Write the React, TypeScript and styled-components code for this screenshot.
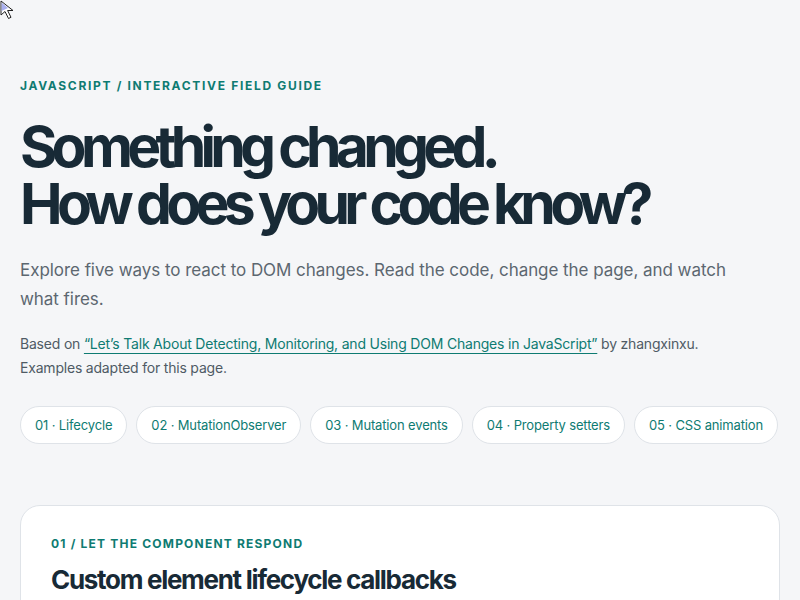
import styled, { createGlobalStyle } from 'styled-components';

const GlobalStyle = createGlobalStyle`
  html, body {
    margin: 0;
    padding: 0;
    background: #f5f6f8;
  }
  body {
    font-family: Inter, "Noto Sans", sans-serif;
    color: #182a36;
  }
`;

const Page = styled.main`
  position: relative;
  padding: 78px 20px 0;
`;

// pointer sitting in the top-left corner
const Pointer = styled.svg`
  position: absolute;
  top: 0;
  left: 0;
  width: 22px;
  height: 20px;
`;

const Eyebrow = styled.p`
  margin: 0;
  font-size: 12px;
  font-weight: 700;
  letter-spacing: 0.14em;
  text-transform: uppercase;
  color: #0e7b72;
`;

const Title = styled.h1`
  margin: 25px 0 0;
  font-size: 57px;
  line-height: 57px;
  font-weight: 700;
  letter-spacing: -0.1em;
  color: #182a36;
`;

const Lead = styled.p`
  margin: 24px 0 0;
  max-width: 730px;
  font-size: 17px;
  line-height: 29px;
  letter-spacing: -0.05px;
  color: #5c6770;
`;

const Credit = styled.p`
  margin: 18px 0 0;
  font-size: 14px;
  line-height: 24px;
  letter-spacing: -0.2px;
  color: #4f5b65;

  a {
    color: #0e7b72;
    text-decoration: underline;
    text-underline-offset: 4px;
  }
`;

const Chips = styled.nav`
  display: flex;
  flex-wrap: wrap;
  gap: 9px;
  margin-top: 26px;
`;

const Chip = styled.a`
  display: inline-flex;
  align-items: center;
  height: 38px;
  padding: 0 14px;
  box-sizing: border-box;
  border: 1px solid #dfe3e8;
  border-radius: 999px;
  background: #fff;
  color: #0e7b72;
  font-size: 13px;
  letter-spacing: -0.15px;
  text-decoration: none;
  white-space: nowrap;
`;

const Card = styled.section`
  margin-top: 61px;
  padding: 30px 30px;
  background: #fff;
  border: 1px solid #dfe3e8;
  border-radius: 20px;
`;

const CardEyebrow = styled(Eyebrow)`
  letter-spacing: 0.1em;
`;

const CardTitle = styled.h2`
  margin: 13px 0 0;
  font-size: 26px;
  line-height: 32px;
  font-weight: 700;
  letter-spacing: -0.05em;
`;

const sections = [
  '01 · Lifecycle',
  '02 · MutationObserver',
  '03 · Mutation events',
  '04 · Property setters',
  '05 · CSS animation',
];

export default function App() {
  return (
    <>
      <GlobalStyle />
      <Page>
        <Pointer viewBox="0 0 22 20">
          <path d="M1 1 L1 15 L5 11.5 L8.5 18.5 L11 17.3 L7.6 10.5 L13 10.5 Z" fill="#fff" stroke="#222" strokeWidth="1" strokeLinejoin="round" />
          <path d="M1.6 2.4 L1.6 11 L8 8 Z" fill="#aab0ee" />
        </Pointer>
        <Eyebrow>JavaScript / Interactive field guide</Eyebrow>
        <Title>
          Something changed.
          <br />
          How does your code know?
        </Title>
        <Lead>
          Explore five ways to react to DOM changes. Read the code, change the page, and watch what fires.
        </Lead>
        <Credit>
          Based on{' '}
          <a href="#source">
            “Let’s Talk About Detecting, Monitoring, and Using DOM Changes in JavaScript”
          </a>{' '}
          by zhangxinxu.
          <br />
          Examples adapted for this page.
        </Credit>
        <Chips>
          {sections.map((s) => (
            <Chip key={s} href="#">
              {s}
            </Chip>
          ))}
        </Chips>
        <Card>
          <CardEyebrow>01 / Let the component respond</CardEyebrow>
          <CardTitle>Custom element lifecycle callbacks</CardTitle>
        </Card>
      </Page>
    </>
  );
}
